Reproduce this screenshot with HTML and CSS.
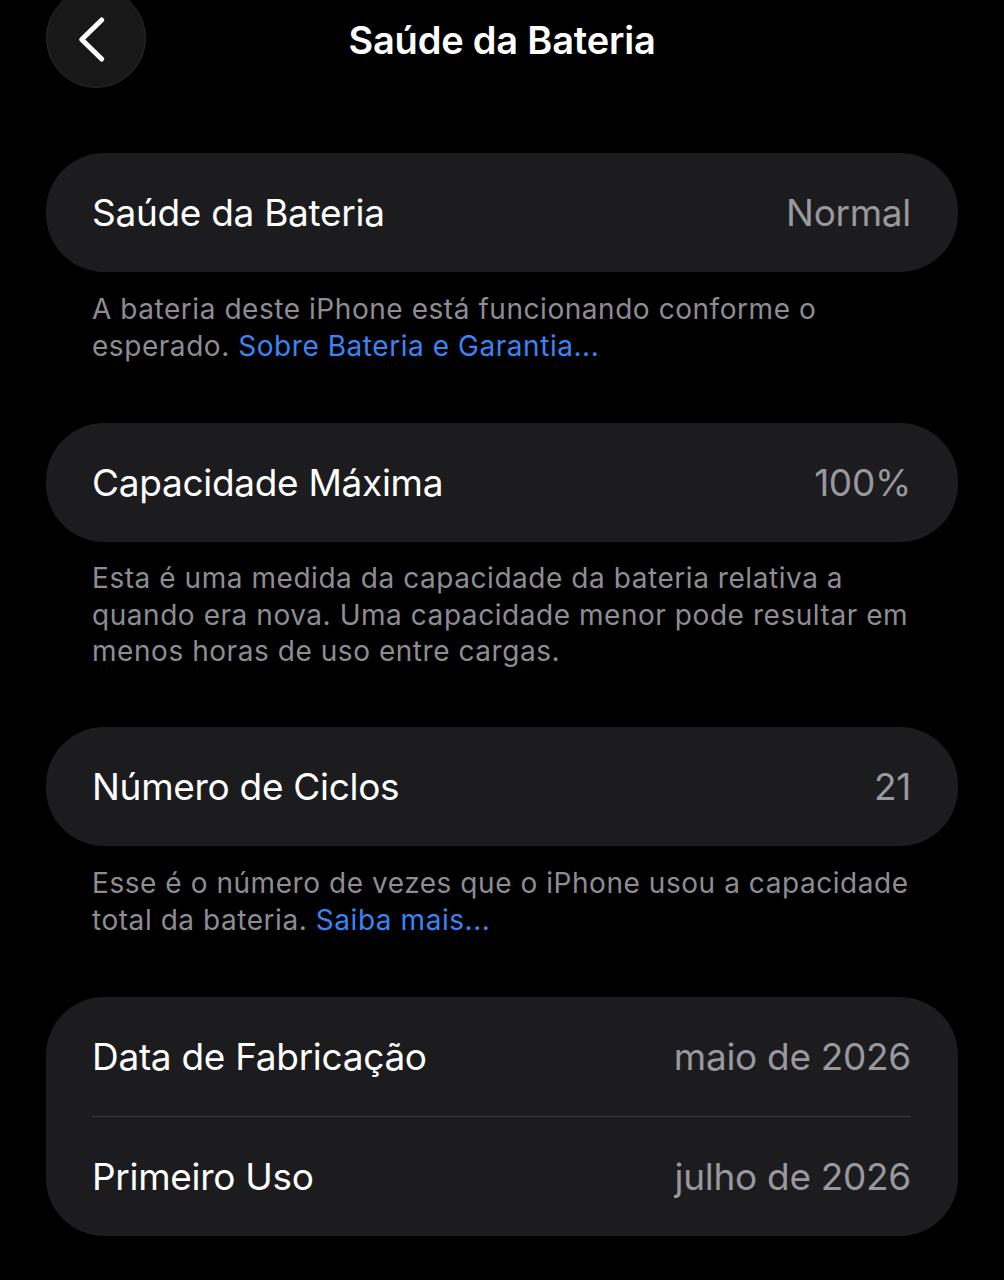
FILE: index.html
```html
<!DOCTYPE html>
<html lang="pt-BR">
<head>
<meta charset="utf-8">
<title>Saúde da Bateria</title>
<link rel="stylesheet" href="styles.css">
</head>
<body>
<header class="nav">
  <div class="nav-left">
    <button class="back" aria-label="Voltar">
      <svg width="40" height="60" viewBox="0 0 40 60" aria-hidden="true">
        <path d="M25.7 12 L5.7 31.5 L25.7 51" fill="none" stroke="#fff" stroke-width="5" stroke-linecap="round" stroke-linejoin="round"/>
      </svg>
    </button>
  </div>
  <h1 class="nav-title">Saúde da Bateria</h1>
  <div class="nav-right"></div>
</header>

<main class="content">
  <section class="group">
    <div class="card">
      <div class="row"><span class="label">Saúde da Bateria</span><span class="value">Normal</span></div>
    </div>
    <p class="note">A bateria deste iPhone está funcionando conforme o esperado. <a class="link" href="#">Sobre Bateria e Garantia...</a></p>
  </section>

  <section class="group">
    <div class="card">
      <div class="row"><span class="label">Capacidade Máxima</span><span class="value">100%</span></div>
    </div>
    <p class="note tight">Esta é uma medida da capacidade da bateria relativa a quando era nova. Uma capacidade menor pode resultar em menos horas de uso entre cargas.</p>
  </section>

  <section class="group">
    <div class="card">
      <div class="row"><span class="label">Número de Ciclos</span><span class="value">21</span></div>
    </div>
    <p class="note">Esse é o número de vezes que o iPhone usou a capacidade total da bateria. <a class="link" href="#">Saiba mais...</a></p>
  </section>

  <section class="group">
    <div class="card">
      <div class="row"><span class="label">Data de Fabricação</span><span class="value">maio de 2026</span></div>
      <div class="row"><span class="label">Primeiro Uso</span><span class="value">julho de 2026</span></div>
    </div>
  </section>
</main>
</body>
</html>
```

FILE: styles.css
```css
* { box-sizing: border-box; }

html, body {
  margin: 0;
  padding: 0;
  background: #000;
}

body {
  font-family: Inter, "Noto Sans", "Liberation Sans", sans-serif;
  color: #fff;
  width: 1004px;
  min-height: 1280px;
  overflow: hidden;
}

.nav {
  display: grid;
  grid-template-columns: 1fr auto 1fr;
  grid-template-rows: 76px;
  align-items: start;
  height: 76px;
  padding: 0 46px;
}

.nav-left {
  display: flex;
  height: 76px;
}

.back {
  width: 100px;
  height: 100px;
  margin: -12px 0 0;
  border-radius: 50%;
  background: #181818;
  border: 1.5px solid #2a2a2a;
  display: flex;
  align-items: center;
  justify-content: center;
  padding: 0;
  flex: none;
}

.back svg {
  display: block;
}

.nav-title {
  margin: 21px 0 0;
  font-size: 38px;
  font-weight: 600;
  letter-spacing: -0.2px;
  text-align: center;
  line-height: 38px;
}

.content {
  padding: 77px 46px 0;
  display: flex;
  flex-direction: column;
  gap: 58px;
}

.group {
  display: flex;
  flex-direction: column;
}

.card {
  background: #1c1c1e;
  border-radius: 58px;
  padding: 0 47px 0 46px;
}

.row {
  height: 119px;
  display: flex;
  align-items: center;
  justify-content: space-between;
  font-size: 37px;
  letter-spacing: -0.3px;
}

.row + .row {
  border-top: 1.5px solid #3a3a3c;
  height: 120px;
}

.label {
  color: #fff;
}

.value {
  color: #98989e;
}

.note {
  margin: 19px 0 0;
  padding: 0 46px;
  font-size: 28px;
  line-height: 37px;
  color: #8d8d93;
  letter-spacing: 0.55px;
}

.note.tight {
  margin-top: 18px;
  line-height: 36.5px;
  margin-bottom: -1px;
}

.link {
  color: #3a85f4;
  text-decoration: none;
}
```
